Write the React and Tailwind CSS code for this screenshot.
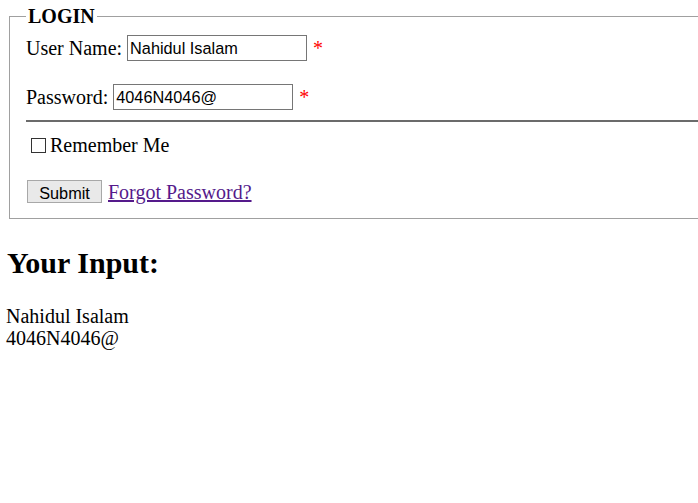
import React, { useState } from "react";

export default function App() {
  const [userName, setUserName] = useState("Nahidul Isalam");
  const [password, setPassword] = useState("4046N4046@");
  const [remember, setRemember] = useState(false);

  return (
    <div className="w-full min-h-[503px] overflow-hidden bg-white text-black font-['Liberation_Serif',serif] text-[20px]">
      <fieldset className="ml-[9px] mt-[5px] w-[720px] border border-[#a0a0a0] pl-[16px] pr-[16px] pb-[15px]">
        <legend className="px-[2px] font-bold leading-[22px]">LOGIN</legend>

        <div className="mt-[8px] flex h-[26px] items-center">
          <span>User Name:</span>
          <input
            className="ml-[5px] h-[26px] w-[180px] border border-[#767676] px-[2px] font-['Liberation_Sans',sans-serif] text-[16.3px] text-black outline-none"
            value={userName}
            onChange={(e) => setUserName(e.target.value)}
          />
          <span className="ml-[6px] text-[#ff0000]">*</span>
        </div>

        <div className="mt-[23px] flex h-[26px] items-center">
          <span>Password:</span>
          <input
            className="ml-[5px] h-[26px] w-[180px] border border-[#767676] px-[2px] font-['Liberation_Sans',sans-serif] text-[16.3px] text-black outline-none"
            value={password}
            onChange={(e) => setPassword(e.target.value)}
          />
          <span className="ml-[6px] text-[#ff0000]">*</span>
        </div>

        <div className="mt-[10px] h-[2px] bg-[#6b6b6b]"></div>

        <label className="mt-[12px] flex h-[22px] items-center">
          <input
            type="checkbox"
            className="ml-[5px] h-[15px] w-[15px] appearance-none border border-[#333] bg-white checked:bg-[#0075ff]"
            checked={remember}
            onChange={(e) => setRemember(e.target.checked)}
          />
          <span className="ml-[4px]">Remember Me</span>
        </label>

        <div className="mt-[24px] flex h-[23px] items-center">
          <button className="ml-[1px] h-[23px] w-[75px] border border-[#a8a8a8] bg-[#e9e9e9] font-['Liberation_Sans',sans-serif] text-[16.3px] text-black">
            Submit
          </button>
          <a href="#" className="ml-[6px] text-[#551a8b] underline">
            Forgot Password?
          </a>
        </div>
      </fieldset>

      <h2 className="mt-[28px] pl-[7px] text-[30px] font-bold leading-[32px]">Your Input:</h2>

      <div className="mt-[26px] pl-[6px] leading-[22px]">
        <p>{userName}</p>
        <p>{password}</p>
      </div>
    </div>
  );
}
